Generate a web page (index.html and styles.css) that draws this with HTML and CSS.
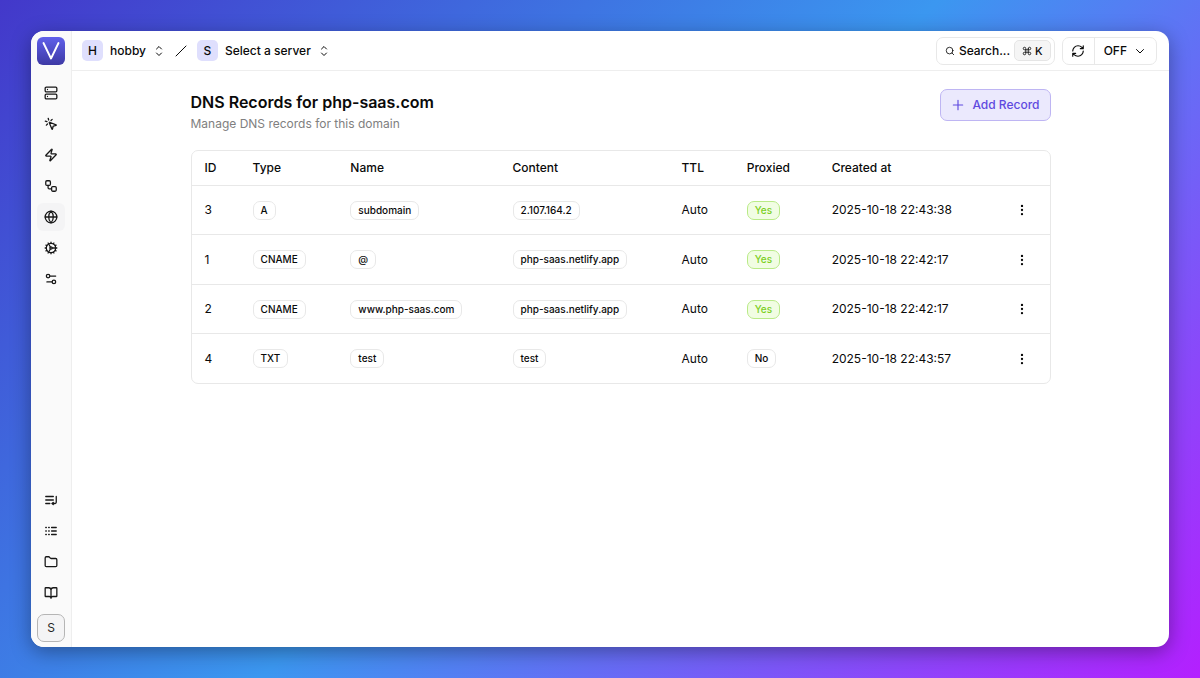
FILE: index.html
```html
<!DOCTYPE html>
<html lang="en">
<head>
<meta charset="utf-8">
<meta name="viewport" content="width=device-width, initial-scale=1">
<title>DNS Records for php-saas.com</title>
<link rel="stylesheet" href="styles.css">
</head>
<body>
<div class="window">
  <aside class="sidebar">
    <a class="logo" href="#" aria-label="Home"><svg viewBox="0 0 28 28"><path d="M6.500 6 14 21.500 21.500 6" fill="none" stroke="#fff" stroke-width="1.900" stroke-linecap="round" stroke-linejoin="round"/></svg></a>
    <nav class="nav" aria-label="Main">
      <a class="nav-item" href="#" aria-label="Servers"><svg class="icon" viewBox="0 0 24 24"><rect width="20" height="8" x="2" y="2" rx="2"/><rect width="20" height="8" x="2" y="14" rx="2"/><path d="M6 6h.01M6 18h.01"/></svg></a>
      <a class="nav-item" href="#" aria-label="Sites"><svg class="icon" viewBox="0 0 24 24"><path d="M14 4.100 12 6M5.100 8l-2.900-.8M6 12l-1.900 2M7.200 2.200 8 5.100"/><path d="M9.037 9.690a.498.498 0 0 1 .653-.653l11 4.500a.5.5 0 0 1-.074.949l-4.349 1.041a1 1 0 0 0-.740.739l-1.040 4.350a.5.5 0 0 1-.950.074z"/></svg></a>
      <a class="nav-item" href="#" aria-label="Scripts"><svg class="icon" viewBox="0 0 24 24"><path d="M4 14a1 1 0 0 1-.780-1.630l9.900-10.200a.5.5 0 0 1 .860.460l-1.920 6.020A1 1 0 0 0 13 10h7a1 1 0 0 1 .780 1.630l-9.900 10.200a.5.5 0 0 1-.860-.460l1.920-6.020A1 1 0 0 0 11 14z"/></svg></a>
      <a class="nav-item" href="#" aria-label="Workflows"><svg class="icon" viewBox="0 0 24 24"><rect width="8" height="8" x="3" y="3" rx="2"/><path d="M7 11v4a2 2 0 0 0 2 2h4"/><rect width="8" height="8" x="13" y="13" rx="2"/></svg></a>
      <a class="nav-item active" href="#" aria-label="Domains" aria-current="page"><svg class="icon" viewBox="0 0 24 24"><circle cx="12" cy="12" r="10"/><path d="M12 2a14.500 14.500 0 0 0 0 20 14.500 14.500 0 0 0 0-20M2 12h20"/></svg></a>
      <a class="nav-item" href="#" aria-label="Settings"><svg class="icon" viewBox="0 0 24 24"><circle cx="12" cy="12" r="8"/><circle cx="12" cy="12" r="2"/><path d="M12 2v2M12 22v-2M17 20.660l-1-1.730M11 10.270 7 3.340M20.660 17l-1.730-1M3.340 7l1.730 1M14 12h8M2 12h2M20.660 7l-1.730 1M3.340 17l1.730-1M17 3.340l-1 1.730M11 13.730l-4 6.930"/></svg></a>
      <a class="nav-item" href="#" aria-label="Preferences"><svg class="icon" viewBox="0 0 24 24"><path d="M20 7h-9M14 17H5"/><circle cx="17" cy="17" r="3"/><circle cx="7" cy="7" r="3"/></svg></a>
    </nav>
    <nav class="nav" aria-label="Secondary">
      <a class="nav-item" href="#" aria-label="Queue"><svg class="icon" viewBox="0 0 24 24"><path d="M16 12H3M16 6H3M10 18H3M21 6v10a2 2 0 0 1-2 2h-5"/><path d="m16 16-2 2 2 2"/></svg></a>
      <a class="nav-item" href="#" aria-label="Logs"><svg class="icon" viewBox="0 0 24 24"><path d="M13 6h8M13 12h8M13 18h8M3 6h1M3 12h1M3 18h1M8 6h1M8 12h1M8 18h1"/></svg></a>
      <a class="nav-item" href="#" aria-label="Files"><svg class="icon" viewBox="0 0 24 24"><path d="M20 20a2 2 0 0 0 2-2V8a2 2 0 0 0-2-2h-7.900a2 2 0 0 1-1.690-.9L9.600 3.900A2 2 0 0 0 7.930 3H4a2 2 0 0 0-2 2v13a2 2 0 0 0 2 2Z"/></svg></a>
      <a class="nav-item" href="#" aria-label="Documentation"><svg class="icon" viewBox="0 0 24 24"><path d="M12 7v14M3 18a1 1 0 0 1-1-1V4a1 1 0 0 1 1-1h5a4 4 0 0 1 4 4 4 4 0 0 1 4-4h5a1 1 0 0 1 1 1v13a1 1 0 0 1-1 1h-6a3 3 0 0 0-3 3 3 3 0 0 0-3-3z"/></svg></a>
    </nav>
    <button class="account" type="button" aria-label="Account">S</button>
  </aside>
  <div class="page">
    <header class="topbar">
      <div class="crumbs">
        <button class="crumb" type="button"><span class="initial">H</span><span>hobby</span><svg class="icon icon-small" viewBox="0 0 24 24"><path d="m7 16 5 5 5-5M7 8l5-5 5 5"/></svg></button>
        <svg class="icon icon-small" viewBox="0 0 24 24" aria-hidden="true"><path d="M22 2 2 22"/></svg>
        <button class="crumb" type="button"><span class="initial">S</span><span>Select a server</span><svg class="icon icon-small" viewBox="0 0 24 24"><path d="m7 16 5 5 5-5M7 8l5-5 5 5"/></svg></button>
      </div>
      <div class="tools">
        <button class="search" type="button"><svg class="icon icon-tiny" viewBox="0 0 24 24"><circle cx="11" cy="11" r="8"/><path d="m21 21-4.300-4.300"/></svg><span>Search...</span><kbd class="shortcut"><svg class="icon icon-tiny" viewBox="0 0 24 24"><path d="M15 6v12a3 3 0 1 0 3-3H6a3 3 0 1 0 3 3V6a3 3 0 1 0-3 3h12a3 3 0 1 0-3-3"/></svg><span>K</span></kbd></button>
        <div class="refresh">
          <button class="refresh-now" type="button" aria-label="Refresh"><svg class="icon" viewBox="0 0 24 24"><path d="M3 12a9 9 0 0 1 9-9 9.750 9.750 0 0 1 6.740 2.740L21 8M21 3v5h-5M21 12a9 9 0 0 1-9 9 9.750 9.750 0 0 1-6.740-2.740L3 16M8 16H3v5"/></svg></button>
          <button class="refresh-rate" type="button"><span>OFF</span><svg class="icon icon-small" viewBox="0 0 24 24"><path d="m5 9 7 7 7-7"/></svg></button>
        </div>
      </div>
    </header>
    <main class="content">
      <div class="heading">
        <div>
          <h1 class="title">DNS Records for php-saas.com</h1>
          <p class="subtitle">Manage DNS records for this domain</p>
        </div>
        <button class="add" type="button"><svg class="icon" viewBox="0 0 24 24"><path d="M4 12h16M12 4v16"/></svg><span>Add Record</span></button>
      </div>
      <div class="table-card">
        <table class="records">
          <colgroup><col class="col-id"><col class="col-type"><col class="col-name"><col class="col-content"><col class="col-ttl"><col class="col-proxied"><col class="col-created"><col class="col-actions"></colgroup>
          <thead>
            <tr><th>ID</th><th>Type</th><th>Name</th><th>Content</th><th>TTL</th><th>Proxied</th><th>Created at</th><td></td></tr>
          </thead>
          <tbody>
            <tr><td>3</td><td><span class="badge">A</span></td><td><span class="badge">subdomain</span></td><td><span class="badge">2.107.164.2</span></td><td>Auto</td><td><span class="badge yes">Yes</span></td><td>2025-10-18 22:43:38</td><td><button class="more" type="button" aria-label="Record actions"><svg class="icon" viewBox="0 0 24 24"><circle cx="12" cy="12" r="1"/><circle cx="12" cy="5" r="1"/><circle cx="12" cy="19" r="1"/></svg></button></td></tr>
            <tr><td>1</td><td><span class="badge">CNAME</span></td><td><span class="badge">@</span></td><td><span class="badge">php-saas.netlify.app</span></td><td>Auto</td><td><span class="badge yes">Yes</span></td><td>2025-10-18 22:42:17</td><td><button class="more" type="button" aria-label="Record actions"><svg class="icon" viewBox="0 0 24 24"><circle cx="12" cy="12" r="1"/><circle cx="12" cy="5" r="1"/><circle cx="12" cy="19" r="1"/></svg></button></td></tr>
            <tr><td>2</td><td><span class="badge">CNAME</span></td><td><span class="badge">www.php-saas.com</span></td><td><span class="badge">php-saas.netlify.app</span></td><td>Auto</td><td><span class="badge yes">Yes</span></td><td>2025-10-18 22:42:17</td><td><button class="more" type="button" aria-label="Record actions"><svg class="icon" viewBox="0 0 24 24"><circle cx="12" cy="12" r="1"/><circle cx="12" cy="5" r="1"/><circle cx="12" cy="19" r="1"/></svg></button></td></tr>
            <tr><td>4</td><td><span class="badge">TXT</span></td><td><span class="badge">test</span></td><td><span class="badge">test</span></td><td>Auto</td><td><span class="badge">No</span></td><td>2025-10-18 22:43:57</td><td><button class="more" type="button" aria-label="Record actions"><svg class="icon" viewBox="0 0 24 24"><circle cx="12" cy="12" r="1"/><circle cx="12" cy="5" r="1"/><circle cx="12" cy="19" r="1"/></svg></button></td></tr>
          </tbody>
        </table>
      </div>
    </main>
  </div>
</div>
</body>
</html>
```
FILE: styles.css
```css
* { box-sizing: border-box; }

body {
  margin: 0;
  min-height: 100vh;
  padding: 31px;
  display: flex;
  background: linear-gradient(135deg, #4338ca 0%, #3b97f0 50%, #b41fff 100%);
  color: #0a0a0a;
  font: 12px/18px Inter, "Liberation Sans", sans-serif;
}

button {
  margin: 0;
  padding: 0;
  border: 0;
  background: none;
  color: inherit;
  font: inherit;
  cursor: pointer;
}

.icon {
  display: block;
  flex: none;
  width: 14px;
  height: 14px;
  fill: none;
  stroke: currentColor;
  stroke-width: 2;
  stroke-linecap: round;
  stroke-linejoin: round;
}
.icon-small { width: 12px; height: 12px; }
.icon-tiny { width: 10px; height: 10px; }

.window {
  flex: 1;
  display: flex;
  min-width: 0;
  overflow: hidden;
  border-radius: 13px;
  background: #fff;
  box-shadow: 0 5px 20px rgba(0, 0, 0, 0.35);
}

.sidebar {
  flex: none;
  display: flex;
  flex-direction: column;
  align-items: center;
  width: 41px;
  padding: 6px 0 5px;
  border-right: 1px solid #eeeeee;
  background: #fafafa;
}
.logo {
  width: 28px;
  height: 28px;
  margin-bottom: 14px;
  border-radius: 6px;
  background: linear-gradient(#6060ea, #3d39a4);
}
.logo svg { display: block; }
.nav {
  display: flex;
  flex-direction: column;
  gap: 3px;
}
.nav + .nav { margin-top: auto; }
.nav-item {
  display: grid;
  place-items: center;
  width: 28px;
  height: 28px;
  border-radius: 6px;
  color: #171717;
}
.nav-item.active { background: #f4f4f5; }
.nav-item .icon { stroke-width: 2.2; }
.account {
  width: 28px;
  height: 28px;
  margin-top: 7px;
  border: 1px solid #b5b5b5;
  border-radius: 7px;
  background: #f4f4f5;
  color: #262626;
}

.page { flex: 1; min-width: 0; }
.topbar {
  display: flex;
  align-items: center;
  justify-content: space-between;
  height: 40px;
  padding: 0 12px 0 10px;
  border-bottom: 1px solid #eeeeee;
  font-weight: 500;
}
.crumbs, .crumb, .tools, .search, .shortcut, .refresh-rate {
  display: flex;
  align-items: center;
}
.crumbs { gap: 10px; }
.crumb { gap: 7px; }
.initial {
  display: grid;
  place-items: center;
  width: 21px;
  height: 21px;
  border-radius: 5px;
  background: #dfdffd;
}
.tools { gap: 7px; }
.search {
  gap: 4px;
  height: 28px;
  padding: 0 3px 0 8px;
  border: 1px solid #e8e8e8;
  border-radius: 7px;
}
.shortcut {
  gap: 3px;
  height: 21px;
  padding: 0 7px;
  border: 1px solid #e5e5e5;
  border-radius: 5px;
  background: #f5f5f5;
  font: 500 11px/18px Inter, sans-serif;
}
.refresh {
  display: flex;
  height: 28px;
  border: 1px solid #e8e8e8;
  border-radius: 7px;
}
.refresh-now {
  display: grid;
  place-items: center;
  width: 32px;
  border-right: 1px solid #e8e8e8;
}
.refresh-rate { gap: 7px; padding: 0 10px 0 9px; }

.content {
  max-width: 860px;
  margin: 0 auto;
  padding: 18px 0;
}
.heading {
  display: flex;
  align-items: flex-start;
  justify-content: space-between;
  margin-bottom: 17px;
}
.title {
  margin: 0;
  font-size: 16px;
  line-height: 26px;
  font-weight: 600;
}
.subtitle { margin: 0; color: #808080; }
.add {
  display: flex;
  align-items: center;
  gap: 7px;
  height: 32px;
  padding: 0 10px;
  border: 1px solid #beb5f3;
  border-radius: 7px;
  background: #ebe9fd;
  color: #5f4ae0;
  font-weight: 500;
}

.table-card {
  border: 1px solid #e8e8e8;
  border-radius: 7px;
}
.records {
  width: 100%;
  table-layout: fixed;
  border-collapse: separate;
  border-spacing: 0;
}
.col-id { width: 5.6%; }
.col-type { width: 11.4%; }
.col-name { width: 18.9%; }
.col-content { width: 19.7%; }
.col-ttl { width: 7.6%; }
.col-proxied { width: 9.9%; }
.col-created { width: 20.4%; }
.col-actions { width: 6.5%; }
.records th, .records td {
  height: 49px;
  padding: 0 0 0 13px;
  border-bottom: 1px solid #e8e8e8;
  text-align: left;
  vertical-align: middle;
  white-space: nowrap;
}
.records thead th, .records thead td { height: 35px; font-weight: 500; }
.records tbody tr:nth-child(even) td { height: 50px; }
.records tbody tr:last-child td { height: 49px; border-bottom: 0; }
.records td:last-child { padding: 0; }
.badge {
  display: inline-block;
  padding: 0 7px;
  border: 1px solid #e8e8e8;
  border-radius: 7px;
  font-size: 10px;
  line-height: 17px;
  font-weight: 500;
  vertical-align: middle;
}
.badge.yes {
  border-color: #b9ea87;
  background: #f1fde3;
  color: #7ccf1f;
}
.more {
  display: grid;
  place-items: center;
  width: 28px;
  height: 28px;
  margin: 0 auto;
}
```
